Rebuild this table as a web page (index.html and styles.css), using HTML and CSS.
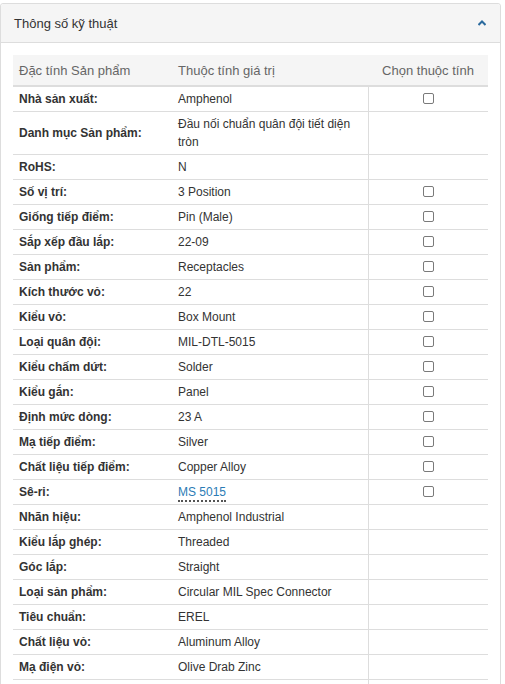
FILE: index.html
```html
<!DOCTYPE html>
<html lang="vi">
<head>
<meta charset="utf-8">
<title>Thông số kỹ thuật</title>
<link rel="stylesheet" href="styles.css">
</head>
<body>
<div class="panel">
  <div class="panel-heading">
    <span class="panel-title">Thông số kỹ thuật</span>
    <svg class="chevron" width="8" height="6" viewBox="0 0 8 6"><path d="M0.5 5 L4 1.5 L7.5 5" fill="none" stroke="#2b6a9e" stroke-width="2"/></svg>
  </div>
  <div class="panel-body">
    <table class="specs">
      <colgroup><col class="c1"><col class="c2"><col class="c3"></colgroup>
      <thead>
        <tr><th>Đặc tính Sản phẩm</th><th>Thuộc tính giá trị</th><th class="center">Chọn thuộc tính</th></tr>
      </thead>
      <tbody>
        <tr><td class="name">Nhà sản xuất:</td><td>Amphenol</td><td class="sel"><span class="cb"></span></td></tr>
        <tr><td class="name">Danh mục Sản phẩm:</td><td>Đầu nối chuẩn quân đội tiết diện tròn</td><td class="sel"></td></tr>
        <tr><td class="name">RoHS:</td><td>N</td><td class="sel"></td></tr>
        <tr><td class="name">Số vị trí:</td><td>3 Position</td><td class="sel"><span class="cb"></span></td></tr>
        <tr><td class="name">Giống tiếp điểm:</td><td>Pin (Male)</td><td class="sel"><span class="cb"></span></td></tr>
        <tr><td class="name">Sắp xếp đầu lắp:</td><td>22-09</td><td class="sel"><span class="cb"></span></td></tr>
        <tr><td class="name">Sản phẩm:</td><td>Receptacles</td><td class="sel"><span class="cb"></span></td></tr>
        <tr><td class="name">Kích thước vỏ:</td><td>22</td><td class="sel"><span class="cb"></span></td></tr>
        <tr><td class="name">Kiểu vỏ:</td><td>Box Mount</td><td class="sel"><span class="cb"></span></td></tr>
        <tr><td class="name">Loại quân đội:</td><td>MIL-DTL-5015</td><td class="sel"><span class="cb"></span></td></tr>
        <tr><td class="name">Kiểu chấm dứt:</td><td>Solder</td><td class="sel"><span class="cb"></span></td></tr>
        <tr><td class="name">Kiểu gắn:</td><td>Panel</td><td class="sel"><span class="cb"></span></td></tr>
        <tr><td class="name">Định mức dòng:</td><td>23 A</td><td class="sel"><span class="cb"></span></td></tr>
        <tr><td class="name">Mạ tiếp điểm:</td><td>Silver</td><td class="sel"><span class="cb"></span></td></tr>
        <tr><td class="name">Chất liệu tiếp điểm:</td><td>Copper Alloy</td><td class="sel"><span class="cb"></span></td></tr>
        <tr><td class="name">Sê-ri:</td><td><a class="link" href="#">MS 5015</a></td><td class="sel"><span class="cb"></span></td></tr>
        <tr><td class="name">Nhãn hiệu:</td><td>Amphenol Industrial</td><td class="sel"></td></tr>
        <tr><td class="name">Kiểu lắp ghép:</td><td>Threaded</td><td class="sel"></td></tr>
        <tr><td class="name">Góc lắp:</td><td>Straight</td><td class="sel"></td></tr>
        <tr><td class="name">Loại sản phẩm:</td><td>Circular MIL Spec Connector</td><td class="sel"></td></tr>
        <tr><td class="name">Tiêu chuẩn:</td><td>EREL</td><td class="sel"></td></tr>
        <tr><td class="name">Chất liệu vỏ:</td><td>Aluminum Alloy</td><td class="sel"></td></tr>
        <tr><td class="name">Mạ điện vỏ:</td><td>Olive Drab Zinc</td><td class="sel"></td></tr>
        <tr><td class="name">&nbsp;</td><td>&nbsp;</td><td class="sel"></td></tr>
      </tbody>
    </table>
  </div>
</div>
</body>
</html>
```
FILE: styles.css
```css
html, body {
  margin: 0;
  padding: 0;
  background: #fff;
}
body {
  font-family: "Liberation Sans", Arial, sans-serif;
  font-size: 12px;
  color: #333;
  padding-top: 3px;
}
.panel {
  width: 499px;
  border: 1px solid #ddd;
  border-radius: 3px;
  background: #fff;
}
.panel-heading {
  display: flex;
  align-items: center;
  justify-content: space-between;
  height: 38px;
  padding: 0 14px 0 13px;
  background: #f5f5f5;
  border-bottom: 1px solid #ddd;
  border-radius: 3px 3px 0 0;
}
.panel-title {
  font-size: 13px;
  color: #333;
}
.chevron {
  display: block;
  margin-right: 0;
}
.panel-body {
  padding: 12px 11px 12px 12px;
}
.specs {
  width: 475px;
  border-collapse: collapse;
  table-layout: fixed;
}
.c1 { width: 159px; }
.c2 { width: 196px; }
.c3 { width: 120px; }
.specs th {
  background: #f5f5f5;
  font-weight: normal;
  color: #666;
  font-size: 13px;
  text-align: left;
  height: 30px;
  padding: 0 6px;
  border-bottom: 2px solid #ddd;
  vertical-align: middle;
}
.specs th.center { text-align: center; }
.specs td {
  padding: 3px 6px;
  line-height: 18px;
  border-bottom: 1px solid #ddd;
  vertical-align: middle;
}
.specs td.name {
  font-weight: bold;
}
.specs td.sel {
  border-left: 1px solid #ddd;
  text-align: center;
}
.cb {
  display: inline-block;
  width: 9px;
  height: 9px;
  border: 1px solid #7a7a7a;
  border-radius: 2px;
  vertical-align: middle;
  margin-top: -2px;
  background: #fff;
}
.link {
  color: #2b7bb5;
  text-decoration: none;
  border-bottom: 2px dotted #555;
  padding-bottom: 1px;
}
```
